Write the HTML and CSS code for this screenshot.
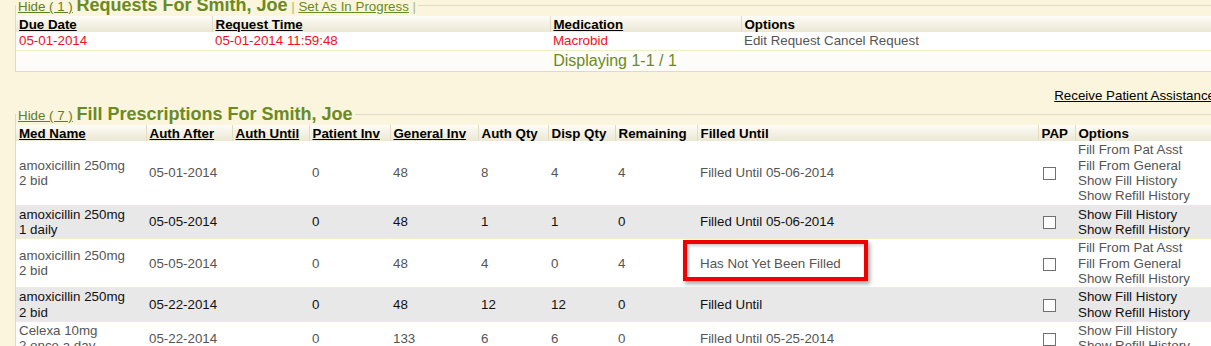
FILE: index.html
```html
<!DOCTYPE html>
<html lang="en">
<head>
    <meta charset="UTF-8">
    <title>Fill Prescriptions</title>
    <link rel="stylesheet" href="styles.css">
</head>
<body>
    <div class="page">
        <fieldset class="panel">
            <legend>
                <a href="#" class="hide-link">Hide ( 1 )</a>
                <span class="panel-title">Requests For Smith, Joe</span>
                <span class="sep">|</span> <a href="#" class="action-link">Set As In Progress</a> <span class="sep">|</span>
            </legend>
            <table class="grid">
                <colgroup>
                    <col style="width: 196px">
                    <col style="width: 338px">
                    <col style="width: 191px">
                    <col>
                </colgroup>
                <thead>
                    <tr>
                        <th><a href="#">Due Date</a></th>
                        <th><a href="#">Request Time</a></th>
                        <th><a href="#">Medication</a></th>
                        <th>Options</th>
                    </tr>
                </thead>
                <tbody>
                    <tr class="request-row">
                        <td class="alert">05-01-2014</td>
                        <td class="alert">05-01-2014 11:59:48</td>
                        <td class="alert">Macrobid</td>
                        <td>Edit Request Cancel Request</td>
                    </tr>
                    <tr class="pager-row">
                        <td colspan="4">Displaying 1-1 / 1</td>
                    </tr>
                </tbody>
            </table>
        </fieldset>

        <div class="assist-bar">
            <a href="#">Receive Patient Assistance</a>
        </div>

        <fieldset class="panel">
            <legend>
                <a href="#" class="hide-link">Hide ( 7 )</a>
                <span class="panel-title">Fill Prescriptions For Smith, Joe</span>
            </legend>
            <table class="grid fills">
                <colgroup>
                    <col style="width: 130px">
                    <col style="width: 86px">
                    <col style="width: 77px">
                    <col style="width: 81px">
                    <col style="width: 88px">
                    <col style="width: 70px">
                    <col style="width: 67px">
                    <col style="width: 82px">
                    <col style="width: 341px">
                    <col style="width: 37px">
                    <col>
                </colgroup>
                <thead>
                    <tr>
                        <th><a href="#">Med Name</a></th>
                        <th><a href="#">Auth After</a></th>
                        <th><a href="#">Auth Until</a></th>
                        <th><a href="#">Patient Inv</a></th>
                        <th><a href="#">General Inv</a></th>
                        <th>Auth Qty</th>
                        <th>Disp Qty</th>
                        <th>Remaining</th>
                        <th>Filled Until</th>
                        <th>PAP</th>
                        <th>Options</th>
                    </tr>
                </thead>
                <tbody>
                    <tr>
                        <td>amoxicillin 250mg<br>2 bid</td>
                        <td>05-01-2014</td>
                        <td></td>
                        <td>0</td>
                        <td>48</td>
                        <td>8</td>
                        <td>4</td>
                        <td>4</td>
                        <td>Filled Until 05-06-2014</td>
                        <td><input type="checkbox" class="pap-check"></td>
                        <td>
                            <div>Fill From Pat Asst</div>
                            <div>Fill From General</div>
                            <div>Show Fill History</div>
                            <div>Show Refill History</div>
                        </td>
                    </tr>
                    <tr class="shaded">
                        <td>amoxicillin 250mg<br>1 daily</td>
                        <td>05-05-2014</td>
                        <td></td>
                        <td>0</td>
                        <td>48</td>
                        <td>1</td>
                        <td>1</td>
                        <td>0</td>
                        <td>Filled Until 05-06-2014</td>
                        <td><input type="checkbox" class="pap-check"></td>
                        <td>
                            <div>Show Fill History</div>
                            <div>Show Refill History</div>
                        </td>
                    </tr>
                    <tr>
                        <td>amoxicillin 250mg<br>2 bid</td>
                        <td>05-05-2014</td>
                        <td></td>
                        <td>0</td>
                        <td>48</td>
                        <td>4</td>
                        <td>0</td>
                        <td>4</td>
                        <td class="marked">Has Not Yet Been Filled<span class="callout"></span></td>
                        <td><input type="checkbox" class="pap-check"></td>
                        <td>
                            <div>Fill From Pat Asst</div>
                            <div>Fill From General</div>
                            <div>Show Refill History</div>
                        </td>
                    </tr>
                    <tr class="shaded">
                        <td>amoxicillin 250mg<br>2 bid</td>
                        <td>05-22-2014</td>
                        <td></td>
                        <td>0</td>
                        <td>48</td>
                        <td>12</td>
                        <td>12</td>
                        <td>0</td>
                        <td>Filled Until</td>
                        <td><input type="checkbox" class="pap-check"></td>
                        <td>
                            <div>Show Fill History</div>
                            <div>Show Refill History</div>
                        </td>
                    </tr>
                    <tr>
                        <td>Celexa 10mg<br>2 once a day</td>
                        <td>05-22-2014</td>
                        <td></td>
                        <td>0</td>
                        <td>133</td>
                        <td>6</td>
                        <td>6</td>
                        <td>0</td>
                        <td>Filled Until 05-25-2014</td>
                        <td><input type="checkbox" class="pap-check"></td>
                        <td>
                            <div>Show Fill History</div>
                            <div>Show Refill History</div>
                        </td>
                    </tr>
                </tbody>
            </table>
        </fieldset>
    </div>
</body>
</html>
```

FILE: styles.css
```css
body {
    margin: 0;
    background-color: #faf5dc;
    font-family: "Liberation Sans", Arial, sans-serif;
    font-size: 13.33px;
    color: #555;
    overflow: hidden;
}

.page {
    width: 1200px;
    margin: -5px 0 0 15px;
}

.panel {
    margin: 0;
    padding: 0;
    border: 1px solid #dedacb;
}

.panel legend {
    padding: 0 2px;
    white-space: nowrap;
}

.hide-link {
    color: #5f7f1f;
}

.panel-title {
    color: #6a8a22;
    font-size: 18px;
    font-weight: bold;
}

.sep {
    color: #a8bf78;
}

.action-link {
    color: #6a8a22;
}

.grid {
    width: 100%;
    border-collapse: collapse;
    table-layout: fixed;
    background-color: #fff;
}

.grid th {
    padding: 1px 3px 0;
    line-height: 15.33px;
    text-align: left;
    font-weight: bold;
    color: #000;
    white-space: nowrap;
    background: linear-gradient(#fdfcf7, #ebe7d3);
    border-left: 1px solid #e2dcc4;
}

.grid th:first-child {
    border-left: none;
}

.grid th a {
    color: #000;
}

.grid td {
    padding: 1px 3px;
    line-height: 15.33px;
    vertical-align: middle;
    white-space: nowrap;
    border-bottom: 1px solid #f1ecc9;
}

.alert {
    color: #f01020;
}

.pager-row td {
    background-color: #fdfcf9;
    text-align: center;
    font-size: 16px;
    line-height: 18.4px;
    color: #6a8a22;
    border-bottom: none;
}

.assist-bar {
    text-align: right;
    padding: 16px 0 1px;
}

.assist-bar a {
    color: #000;
}

.fills .shaded td {
    background-color: #e8e8e8;
    color: #111;
}

.pap-check {
    appearance: none;
    width: 13px;
    height: 13px;
    margin: 0 0 0 2px;
    vertical-align: middle;
    border: 1px solid #707070;
    background-color: #fff;
}

.marked {
    position: relative;
}

.callout {
    position: absolute;
    left: -14px;
    top: 1px;
    width: 177px;
    height: 33px;
    border: 4px solid #f20000;
    box-shadow: 2px 3px 4px rgba(0, 0, 0, 0.35), inset 2px 2px 3px rgba(0, 0, 0, 0.2);
}
```
